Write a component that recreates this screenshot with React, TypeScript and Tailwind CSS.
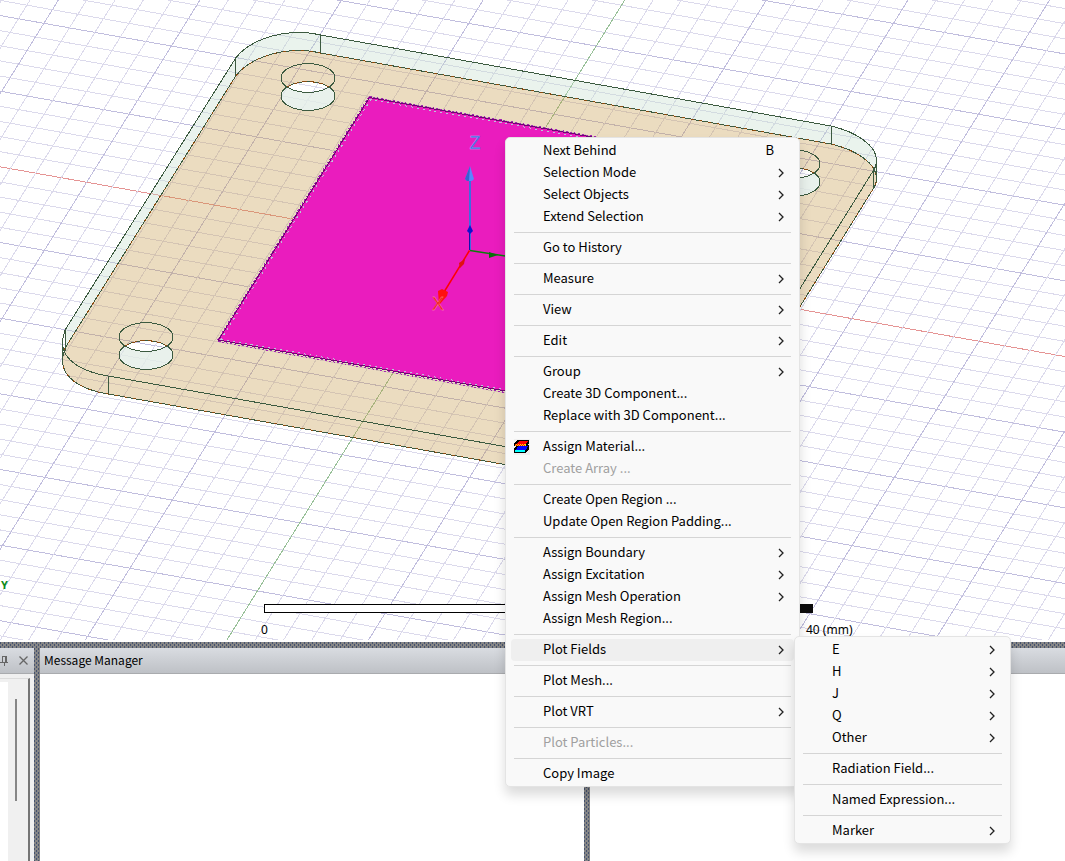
import { Fragment } from "react";
import { clsx } from "clsx";

interface MenuEntry {
  label: string;
  shortcut?: string;
  submenu?: boolean;
  disabled?: boolean;
  active?: boolean;
  icon?: boolean;
}

const contextMenu: MenuEntry[][] = [
  [
    { label: "Next Behind", shortcut: "B" },
    { label: "Selection Mode", submenu: true },
    { label: "Select Objects", submenu: true },
    { label: "Extend Selection", submenu: true },
  ],
  [{ label: "Go to History" }],
  [{ label: "Measure", submenu: true }],
  [{ label: "View", submenu: true }],
  [{ label: "Edit", submenu: true }],
  [
    { label: "Group", submenu: true },
    { label: "Create 3D Component..." },
    { label: "Replace with 3D Component..." },
  ],
  [
    { label: "Assign Material...", icon: true },
    { label: "Create Array ...", disabled: true },
  ],
  [
    { label: "Create Open Region ..." },
    { label: "Update Open Region Padding..." },
  ],
  [
    { label: "Assign Boundary", submenu: true },
    { label: "Assign Excitation", submenu: true },
    { label: "Assign Mesh Operation", submenu: true },
    { label: "Assign Mesh Region..." },
  ],
  [{ label: "Plot Fields", submenu: true, active: true }],
  [{ label: "Plot Mesh..." }],
  [{ label: "Plot VRT", submenu: true }],
  [{ label: "Plot Particles...", disabled: true }],
  [{ label: "Copy Image" }],
];

const plotFieldsMenu: MenuEntry[][] = [
  [
    { label: "E", submenu: true },
    { label: "H", submenu: true },
    { label: "J", submenu: true },
    { label: "Q", submenu: true },
    { label: "Other", submenu: true },
  ],
  [{ label: "Radiation Field..." }],
  [{ label: "Named Expression..." }],
  [{ label: "Marker", submenu: true }],
];

function MaterialIcon() {
  return (
    <svg
      width="16"
      height="16"
      shapeRendering="crispEdges"
      className="absolute left-[3px] top-[3px] bg-[#f0f0f0]"
      aria-hidden="true"
    >
      <path d="M4 1h11v3l-2 2h2v4l-3 4H0v-4l2-3H0V4z" fill="#000" />
      <path d="M5 2h9l-2 3H2z" fill="#f00" />
      <path d="M1 5h11v2H1z" fill="#ffe000" />
      <path d="M1 5h1v1H1zM3 5h1v1H3zM5 5h1v1H5zM7 5h1v1H7zM9 5h1v1H9zM2 6h1v1H2zM4 6h1v1H4zM6 6h1v1H6zM8 6h1v1H8zM10 6h1v1h-1z" fill="#f00" />
      <path d="M4 7h10l-2 4H2z" fill="#00f" />
      <path d="M1 11h10v2H1z" fill="#0ff" />
    </svg>
  );
}

function Chevron() {
  return (
    <svg width="6" height="10" viewBox="0 0 6 10" className="mr-2.5" aria-hidden="true">
      <path d="M1 1l4 4-4 4" fill="none" stroke="#222" strokeWidth="1.3" />
    </svg>
  );
}

function MenuItem({ label, shortcut, submenu, disabled, active, icon }: MenuEntry) {
  return (
    <button
      type="button"
      role="menuitem"
      disabled={disabled}
      className={clsx(
        "relative mx-[5px] flex h-[22px] items-center justify-between rounded-sm pl-8 text-left",
        disabled ? "text-[#a0a0a0]" : "text-black",
        active && "bg-[#efefef]",
      )}
    >
      {icon && <MaterialIcon />}
      <span className="pb-0.5">{label}</span>
      {shortcut && <span className="mr-5 pb-0.5">{shortcut}</span>}
      {submenu && <Chevron />}
    </button>
  );
}

function Menu({ groups, className }: { groups: MenuEntry[][]; className: string }) {
  return (
    <div
      role="menu"
      className={clsx(
        "absolute flex flex-col rounded-[5px] border border-[#e4e4e4] bg-[#f9f9f9] pt-[2px] pb-px text-[13px] leading-5 shadow-[0_8px_12px_rgba(0,0,0,0.14)]",
        className,
      )}
    >
      {groups.map((group, i) => (
        <Fragment key={group[0].label}>
          {i > 0 && <hr className="mx-2 my-1 border-[#d5d5d5]" />}
          {group.map((entry) => (
            <MenuItem key={entry.label} {...entry} />
          ))}
        </Fragment>
      ))}
    </div>
  );
}

// Two families of parallel lines, every fifth one is a major line
const ROW_SLOPE = 0.1782;
const COL_SLOPE = 0.6217;
const rows = Array.from({ length: 120 }, (_, i) => i - 50);
const cols = Array.from({ length: 140 }, (_, i) => i - 50);

function gridColor(i: number, axis: string) {
  if (i === 0) return axis;
  return i % 5 === 0 ? "#c1bede" : "#dcdaec";
}

function Grid() {
  return (
    <g shapeRendering="crispEdges">
      {rows.map((i) => {
        const y = 166.8 + i * 15.13;
        return (
          <line key={i} x1={0} y1={y} x2={3000} y2={y + 3000 * ROW_SLOPE} stroke={gridColor(i, "#e59494")} />
        );
      })}
      {cols.map((i) => {
        const x = 624.8 + i * 28.32;
        return (
          <line key={i} x1={x} y1={0} x2={x - 2000 * COL_SLOPE} y2={2000} stroke={gridColor(i, "#98c098")} />
        );
      })}
    </g>
  );
}

function Hole({ cx, cy }: { cx: number; cy: number }) {
  const top = cy - 18;
  // the two rims cross at half the drop between them
  const x1 = cx - 21;
  const x2 = cx + 21;
  const mid = cy - 9;
  return (
    <g fill="none" stroke="#3c5a40">
      <path
        d={`M${x1} ${mid}A27 14.3 0 1 0 ${x2} ${mid}A27 14.3 0 0 1 ${x1} ${mid}Z`}
        fill="#e4eee7"
        fillOpacity="0.8"
        stroke="none"
      />
      <ellipse cx={cx} cy={top} rx="27" ry="14.3" />
      <ellipse cx={cx} cy={cy} rx="27" ry="14.3" />
      <path d={`M${x1} ${mid}A27 14.3 0 0 1 ${x2} ${mid}`} stroke="#8a4b10" strokeDasharray="5 3" />
    </g>
  );
}

const FACE =
  "M235.7 58C248 42 274 32 301.7 32.5Q311 32.5 320.5 35L831 126C857 132 876.5 146 876.5 160Q876.5 166 873.7 170L712 430A84 44.5 0 0 1 592 462L108.3 376C82 372 62.5 360 62.5 343Q62.5 336 65.3 329.6Z";
const BOTTOM_FACE =
  "M235.7 76C248 60 274 50 301.7 50.5Q311 50.5 320.5 53L831 144C857 150 876.5 164 876.5 178Q876.5 184 873.7 188L712 448A84 44.5 0 0 1 592 480L108.3 394C82 390 62.5 378 62.5 361Q62.5 354 65.3 347.6Z";
const BACK_WALLS =
  "M65.3 347.6V329.6L235.7 58C248 42 274 32 301.7 32.5Q311 32.5 320.5 35L831 126C857 132 876.5 146 876.5 160V178C876.5 164 857 150 831 144L320.5 53Q311 50.5 301.7 50.5C274 50 248 60 235.7 76Z";
const HOLES =
  "M281 96.3a27 14.3 0 1 0 54 0a27 14.3 0 1 0 -54 0ZM119.3 355a27 14.3 0 1 0 54 0a27 14.3 0 1 0 -54 0ZM765.6 182a27 14.3 0 1 0 54 0a27 14.3 0 1 0 -54 0Z";
const PATCH = "M369.5 97.5L690 154.5L539 397L218.5 340Z";

function Model() {
  return (
    <g shapeRendering="crispEdges">
      <path d={BACK_WALLS} fill="#c4dccb" fillOpacity="0.35" />
      <path d={BOTTOM_FACE + HOLES} fillRule="evenodd" fill="#c69b4b" fillOpacity="0.35" />
      <g fill="none" stroke="#3c5a40">
        <path d={BOTTOM_FACE} />
        <path d={BOTTOM_FACE} stroke="#8a4b10" strokeDasharray="3 6" />
        <path d={FACE} />
        <path d="M235.5 58V76M320.5 35V53M831.5 126V144M873.5 170V188M108.5 376V394M65.5 330V351M62.5 344V362M876.5 160V180" />
      </g>
      <Hole cx={308} cy={96} />
      <Hole cx={146} cy={355} />
      <Hole cx={793} cy={182} />
      <path d={PATCH} fill="#ea1cbe" stroke="#6a0a70" />
      <path d="M369.5 96.5L690 153.5M218.5 341.5L539 398.5M368.5 97L217.5 340" stroke="#a425b4" strokeDasharray="2 2" />
      <path d="M369.5 99.5L690 156.5M221 339L539 395.5M371 99L220.5 340" stroke="#b7c8d8" strokeDasharray="2 4" />
    </g>
  );
}

function AxisTriad() {
  return (
    <g>
      <path d="M470 250V178" stroke="#3f6be0" strokeWidth="2" />
      <path d="M470 166l4 13-2 2h-5l-2-2z" fill="#5a86ff" />
      <path d="M470 166l-1 15h-2l-2-2z" fill="#3a62cf" />
      <path d="M469.5 250V230" stroke="#1010b0" strokeWidth="1" />
      <path d="M470 225l3 6-3 3-3-3z" fill="#1010d0" />
      <path d="M470 250.5L512 257" stroke="#0a800a" strokeWidth="1.5" />
      <path d="M489 252l9 3-9 3z" fill="#0a700a" />
      <path d="M469.5 250.5L441 297" stroke="#f00" strokeWidth="1.5" />
      <path d="M465 259l-1 5-4 4-1-5z" fill="#e01010" />
      <path d="M438 291l4-2 6 3-1 4-8 9z" fill="#ff1010" />
      <g fontSize="18" textAnchor="middle" strokeWidth="0.3" className="font-['Liberation_Sans',sans-serif]">
        <text x="475" y="149" fill="#3f66e0" stroke="#a8b8ff">Z</text>
        <text x="438" y="310" fill="#f01818" stroke="#ffb0a0">X</text>
      </g>
    </g>
  );
}

function ScaleBar() {
  return (
    <g>
      <rect x="264.5" y="604.5" width="548" height="8" fill="#fff" stroke="#000" />
      <rect x="539" y="604" width="274" height="9" fill="#0c0c0c" />
      <text x="261" y="634" fontSize="12">0</text>
      <text x="806" y="634" fontSize="12">40 (mm)</text>
      <text x="1" y="589" fontSize="11" fontWeight="700" fill="#0a8a1a">Y</text>
    </g>
  );
}

function Viewport() {
  return (
    <div className="min-h-0 flex-1 overflow-hidden bg-white pb-0.5 font-['Noto_Sans',sans-serif]">
      <svg className="block h-full w-full" role="img" aria-label="3D model">
        <Grid />
        <Model />
        <AxisTriad />
        <ScaleBar />
      </svg>
    </div>
  );
}

function Splitter({ className }: { className: string }) {
  return (
    <div
      className={clsx(
        "shrink-0 bg-[#868686] bg-[image:conic-gradient(at_1px_2px,transparent_270deg,#46536f_270deg),conic-gradient(at_1px_2px,transparent_270deg,#46536f_270deg)] bg-[size:4px_4px] bg-[position:0_0,2px_2px]",
        className,
      )}
    />
  );
}

function PanelHeader({ title, children }: { title?: string; children?: React.ReactNode }) {
  return (
    <div className="flex h-[26px] items-center border-b border-[#a9abae] bg-linear-to-b from-[#d9dce1] to-[#bec1c6]">
      {title && <h2 className="px-1 pb-0.5 text-[12px] leading-4 text-black">{title}</h2>}
      {children}
    </div>
  );
}

function SidePanel() {
  return (
    <aside className="flex w-[34px] shrink-0 flex-col bg-[#f0f0f0]">
      <PanelHeader>
        <div className="flex w-full items-center justify-between pr-1.5">
          <button type="button" aria-label="Auto hide">
            <svg width="9" height="10" fill="none" stroke="#666" shapeRendering="crispEdges">
              <path d="M2.5 6V0.5H6.5V6M5.5 0V6M0 6.5H8M4.5 7V10" />
            </svg>
          </button>
          <button type="button" aria-label="Close">
            <svg width="9" height="9" fill="none" stroke="#666" strokeWidth="1.3">
              <path d="M0.5 0.5L8.5 8.5M8.5 0.5L0.5 8.5" />
            </svg>
          </button>
        </div>
      </PanelHeader>
      <div className="mt-1 mr-1 flex flex-1 border-t border-r-2 border-t-[#dcdcdc] border-r-[#757575]">
        <div className="mt-[3px] w-2 bg-white" />
        <div className="mt-5 ml-[7px] h-[102px] w-0.5 bg-[#868686]" />
      </div>
    </aside>
  );
}

export default function App() {
  return (
    <main className="relative flex h-screen flex-col overflow-hidden bg-white font-['Noto_Sans_CJK_SC',sans-serif]">
      <Viewport />
      <Splitter className="h-1.5" />
      <div className="flex h-[213px]">
        <SidePanel />
        <Splitter className="w-1.5" />
        <section className="flex-[544] bg-white">
          <PanelHeader title="Message Manager" />
        </section>
        <Splitter className="w-1.5" />
        <section className="flex-[475] bg-white">
          <PanelHeader />
        </section>
      </div>
      <Menu groups={contextMenu} className="top-[137px] left-[505px] w-[295px]" />
      <Menu groups={plotFieldsMenu} className="top-[636px] left-[794px] w-[217px]" />
    </main>
  );
}
